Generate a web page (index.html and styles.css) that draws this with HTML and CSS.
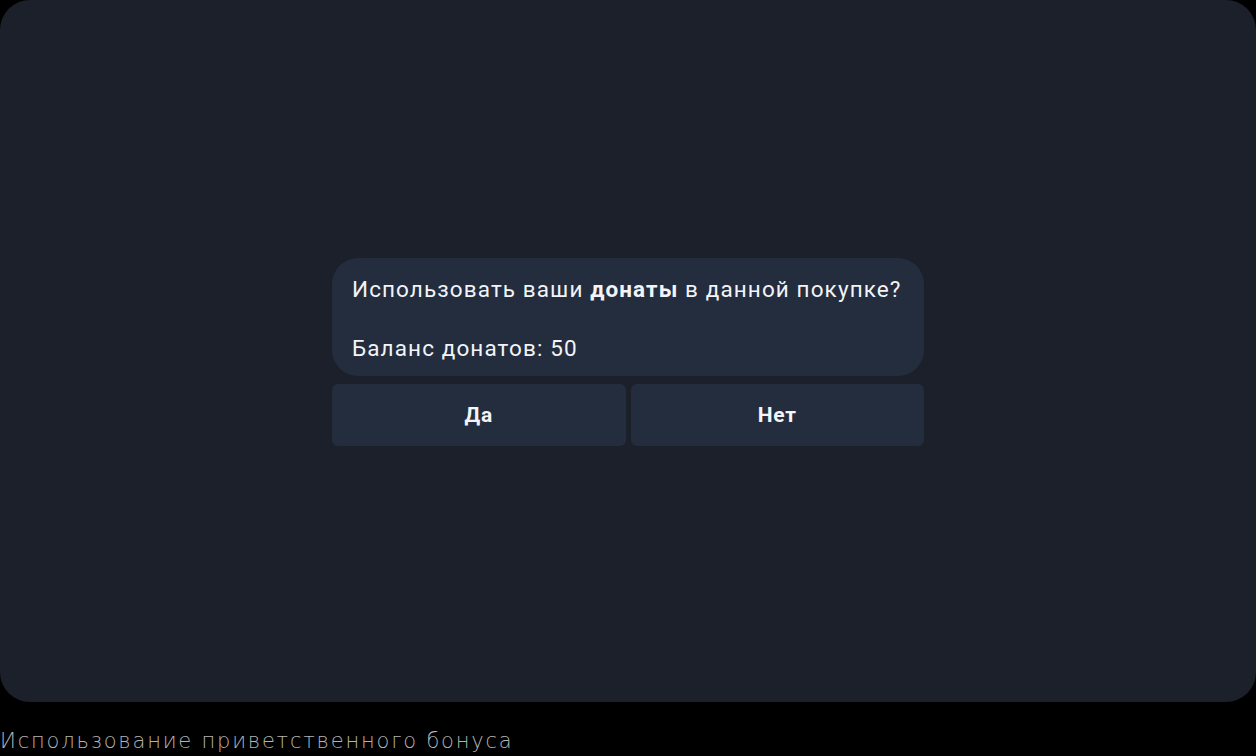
FILE: index.html
```html
<!DOCTYPE html>
<html lang="ru">
<head>
<meta charset="utf-8">
<link rel="stylesheet" href="styles.css">
</head>
<body>
<div class="frame">
  <div class="screen">
    <div class="dialog">
      <div class="bubble">
        <p class="line">Использовать ваши <b>донаты</b> в данной покупке?</p>
        <p class="line">Баланс донатов: 50</p>
      </div>
      <div class="buttons">
        <div class="btn">Да</div>
        <div class="btn">Нет</div>
      </div>
    </div>
  </div>
  <div class="caption">Использование приветственного бонуса</div>
</div>
</body>
</html>
```

FILE: styles.css
```css
html, body {
  margin: 0;
  padding: 0;
  background: #000;
}
.frame {
  width: 1256px;
  height: 756px;
  display: flex;
  flex-direction: column;
  font-family: Roboto, "Liberation Sans", sans-serif;
}
.screen {
  height: 702px;
  background: #1b202b;
  border-radius: 30px;
  display: flex;
  align-items: flex-start;
  justify-content: center;
  box-sizing: border-box;
  padding-top: 258px;
}
.dialog {
  width: 592px;
  display: flex;
  flex-direction: column;
  gap: 8px;
}
.bubble {
  background: #232d3e;
  border-radius: 26px;
  height: 118px;
  box-sizing: border-box;
  padding: 17px 20px 0;
  display: flex;
  flex-direction: column;
  gap: 31px;
}
.line {
  margin: 0;
  color: #f2f4f7;
  font-family: Roboto, "Liberation Sans", sans-serif;
  font-size: 22.5px;
  letter-spacing: 1.1px;
  line-height: 28px;
}
.line b {
  font-weight: 700;
}
.buttons {
  display: flex;
  gap: 5px;
}
.btn {
  flex: 1;
  height: 62px;
  background: #232d3e;
  border-radius: 6px;
  display: flex;
  align-items: center;
  justify-content: center;
  color: #f2f4f7;
  font-family: Roboto, "Liberation Sans", sans-serif;
  font-weight: 700;
  font-size: 21px;
  letter-spacing: 0.8px;
}
.caption {
  margin-top: 25px;
  color: #b3b3b3;
  font-family: "DejaVu Sans", sans-serif;
  font-size: 21px;
  font-weight: 200;
  line-height: 28px;
  letter-spacing: 1.8px;
}
```
